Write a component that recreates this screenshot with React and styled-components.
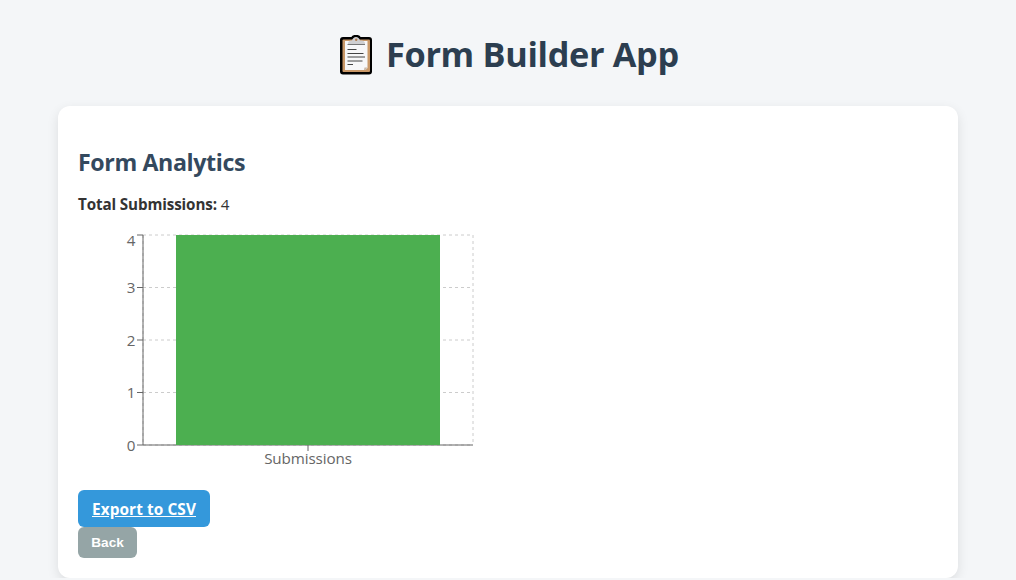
import React from "react";
import styled, { createGlobalStyle } from "styled-components";

const GlobalStyle = createGlobalStyle`
  * { box-sizing: border-box; }
  html { overflow: hidden; }
  body {
    margin: 0;
    background: #f4f6f8;
    color: #333;
    font: 16px/24px "Segoe UI", "Open Sans", sans-serif;
  }
`;

const Page = styled.main`
  width: 900px;
  margin: 0 auto;
  padding-top: 30px;
`;

const Title = styled.h1`
  display: flex;
  justify-content: center;
  align-items: flex-start;
  gap: 12px;
  height: 76px;
  margin: 0;
  padding-left: 1px;
  color: #2c3e50;
  font-size: 34.3px;
  line-height: 48px;
  white-space: nowrap;
`;

const TitleText = styled.span`
  width: 293px;
  letter-spacing: -0.34px;
`;

const ClipboardIcon = styled.svg`
  flex: none;
  width: 36px;
  height: 42px;
  margin-top: 4px;
`;

const Card = styled.section`
  display: flex;
  flex-direction: column;
  align-items: flex-start;
  height: 472px;
  padding: 40px 20px 20px;
  background: #fff;
  border-radius: 12px;
  box-shadow: 0 4px 12px rgba(0, 0, 0, 0.1);
`;

const Heading = styled.h2`
  margin: 0 0 14px;
  color: #34495e;
  font-size: 23.2px;
  line-height: 33px;
  letter-spacing: -0.38px;
`;

const Total = styled.p`
  height: 22px;
  margin: 0 0 15px;
  font-size: 15.2px;
  line-height: 22px;
  letter-spacing: -0.12px;
`;

const Chart = styled.svg`
  display: block;
  width: 400px;
  height: 250px;
  margin-bottom: 10px;
  overflow: visible;
`;

const Tick = styled.text`
  fill: #666;
  font-size: 15.2px;
  letter-spacing: ${(p) => (p.$tight ? "-0.1px" : "0")};
`;

const ExportLink = styled.a`
  width: 132px;
  height: 37px;
  border-radius: 6px;
  background: #3498db;
  color: #fff;
  font-size: 15.4px;
  font-weight: 700;
  line-height: 39px;
  letter-spacing: 0.08px;
  text-align: center;
  text-decoration: underline;
  white-space: nowrap;
`;

const BackButton = styled.button`
  width: 59px;
  height: 31px;
  padding: 0;
  border: 0;
  border-radius: 6px;
  background: #95a5a6;
  color: #fff;
  font: bold 13.6px/31px "Liberation Sans", Arial, sans-serif;
`;

function Clipboard() {
  return (
    <ClipboardIcon viewBox="0 0 36 42" aria-hidden="true">
      <path
        d="M5 3h8.500C14 1.500 15.500 1 18 1s4 .5 4.500 2H31q3 0 3 3v31.500q0 3-3 3H5q-3 0-3-3V6q0-3 3-3z"
        fill="#000"
      />
      <rect x="4.500" y="5.500" width="27.500" height="32.500" rx="1" fill="#c99868" />
      <path d="M7 7h22.500v27L27.500 36H7z" fill="#f7f7f8" />
      <path d="M29.500 33.500h-3l-.5 2.500h1.500z" fill="#c9b8a8" />
      <path d="M10 10Q10 6.500 13 6.500h1Q15 3 18 3t4 3.500h1.500q3.500 0 3.500 3.500z" fill="#cfcfd1" />
      <circle cx="18.200" cy="5.700" r="1.200" fill="#b07a4b" />
      <path d="M9.500 10.500h17.500" stroke="#777" strokeWidth="1" />
      <path d="M9.500 15.500h9M9.500 19.500h16M9.500 23h17.500M9.500 27h15M9.500 30.500h5.500" stroke="#444" strokeWidth="1" />
    </ClipboardIcon>
  );
}

const rows = [
  { value: 4, y: 5 },
  { value: 3, y: 57.5 },
  { value: 2, y: 110 },
  { value: 1, y: 162.5 },
  { value: 0, y: 215 },
];

function SubmissionsChart() {
  return (
    <Chart viewBox="0 0 400 250">
      <g stroke="#ccc" strokeDasharray="3 3">
        {rows.map((r) => (
          <line key={r.value} x1="65" x2="395" y1={r.y} y2={r.y} />
        ))}
        {[65, 230, 395].map((x) => (
          <line key={x} x1={x} x2={x} y1="5" y2="215" />
        ))}
      </g>
      <g stroke="#666">
        <line x1="65" x2="395" y1="215" y2="215" />
        <line x1="230" x2="230" y1="215" y2="221" />
        <line x1="65" x2="65" y1="5" y2="215" />
        {rows.map((r) => (
          <line key={r.value} x1="59" x2="65" y1={r.y} y2={r.y} />
        ))}
      </g>
      {rows.map((r) => (
        <Tick key={r.value} x="57.5" y={r.value === 4 ? 16 : r.y + 5.5} textAnchor="end">
          {r.value}
        </Tick>
      ))}
      <Tick $tight x="230" y="234" textAnchor="middle">
        Submissions
      </Tick>
      <rect x="98" y="5" width="264" height="210" fill="#4caf50" />
    </Chart>
  );
}

export default function App() {
  return (
    <>
      <GlobalStyle />
      <Page>
        <Title>
          <Clipboard />
          <TitleText>Form Builder App</TitleText>
        </Title>
        <Card>
          <Heading>Form Analytics</Heading>
          <Total>
            <strong>Total Submissions:</strong> 4
          </Total>
          <SubmissionsChart />
          <ExportLink href="#">Export to CSV</ExportLink>
          <BackButton>Back</BackButton>
        </Card>
      </Page>
    </>
  );
}
